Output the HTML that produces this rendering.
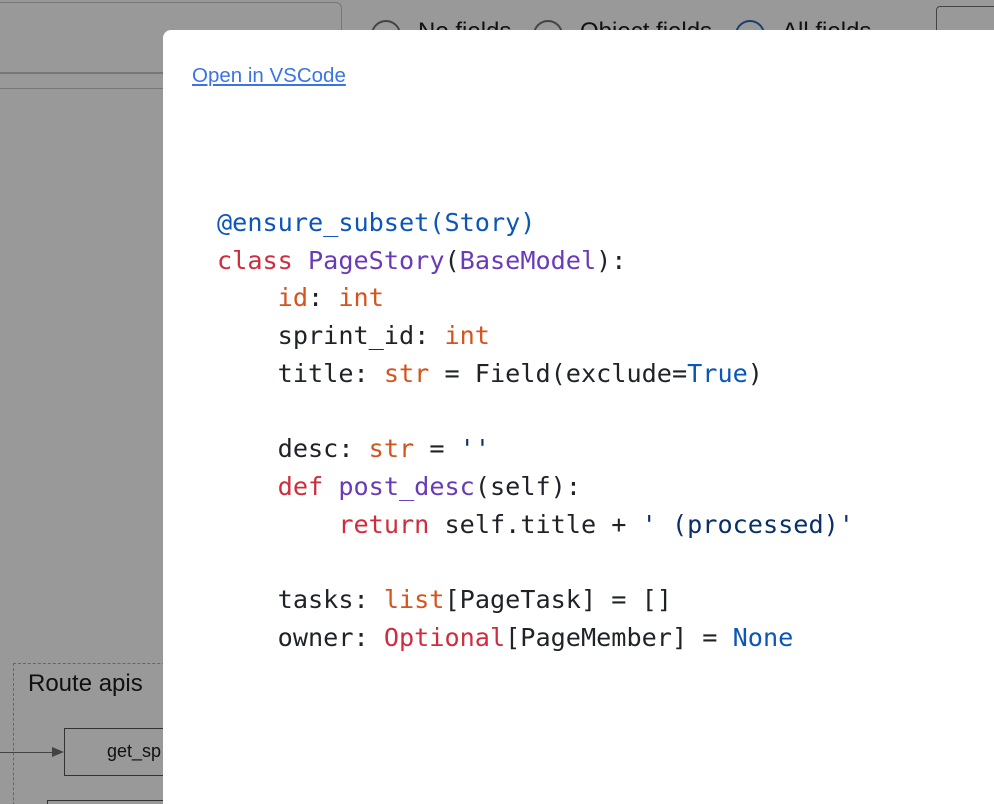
<!DOCTYPE html>
<html><head><style>
html,body{margin:0;padding:0;width:994px;height:804px;overflow:hidden;background:#999;font-family:"Liberation Sans",sans-serif;position:relative}
.a{position:absolute}
.modal{position:absolute;left:163px;top:30px;width:831px;height:774px;background:#fff;border-radius:8px 0 0 0;overflow:hidden}
.link{position:absolute;left:29px;top:34px;font-size:20.5px;color:#3b73e6;text-decoration:underline}
pre{position:absolute;left:54px;top:174px;margin:0;font-family:"DejaVu Sans Mono","Liberation Mono",monospace;font-size:25.2px;line-height:37.7px;color:#1f2328}
.d{color:#0b56b8}.k{color:#cf2d3e}.p{color:#6a3bb8}.o{color:#d4541c}.s{color:#0a3069}
.r{position:absolute;top:20px;width:30px;height:30px;border:2px solid #444;border-radius:50%;box-sizing:border-box}
.t{position:absolute;top:18px;font-size:24px;color:#111}
</style></head><body>
<div class="a" style="left:-10px;top:2px;width:350px;height:70px;border:1px solid #777;border-radius:6px"></div>
<div class="a" style="left:0;top:72px;width:163px;border-top:1px solid #777"></div>
<div class="a" style="left:0;top:88px;width:163px;border-top:1px solid #777"></div>
<div class="r" style="left:371px"></div><div class="t" style="left:418px">No fields</div>
<div class="r" style="left:533px"></div><div class="t" style="left:580px">Object fields</div>
<div class="r" style="left:735px;border-color:#1a3f73"></div><div class="t" style="left:782px">All fields</div>
<div class="a" style="left:936px;top:6px;width:80px;height:40px;border:1px solid #444;border-radius:4px"></div>
<div class="a" style="left:13px;top:663px;width:200px;height:200px;border:1px dashed #666"></div>
<div class="a" style="left:28px;top:670px;font-size:24px;color:#111">Route apis</div>
<div class="a" style="left:0;top:752px;width:58px;border-top:1px solid #444"></div>
<div class="a" style="left:52px;top:747px;width:0;height:0;border-left:12px solid #444;border-top:5px solid transparent;border-bottom:5px solid transparent"></div>
<div class="a" style="left:64px;top:728px;width:120px;height:46px;border:1px solid #333"></div>
<div class="a" style="left:107px;top:741px;font-size:18px;color:#111">get_sp</div>
<div class="a" style="left:47px;top:800px;width:140px;height:20px;border:1px solid #333"></div>
<div class="modal">
<div class="link">Open in VSCode</div>
<pre><span class="d">@ensure_subset(Story)</span>
<span class="k">class</span> <span class="p">PageStory</span>(<span class="p">BaseModel</span>):
    <span class="o">id</span>: <span class="o">int</span>
    sprint_id: <span class="o">int</span>
    title: <span class="o">str</span> = Field(exclude=<span class="d">True</span>)

    desc: <span class="o">str</span> = <span class="s">''</span>
    <span class="k">def</span> <span class="p">post_desc</span>(self):
        <span class="k">return</span> self.title + <span class="s">' (processed)'</span>

    tasks: <span class="o">list</span>[PageTask] = []
    owner: <span class="k">Optional</span>[PageMember] = <span class="d">None</span></pre>
</div>
</body></html>
